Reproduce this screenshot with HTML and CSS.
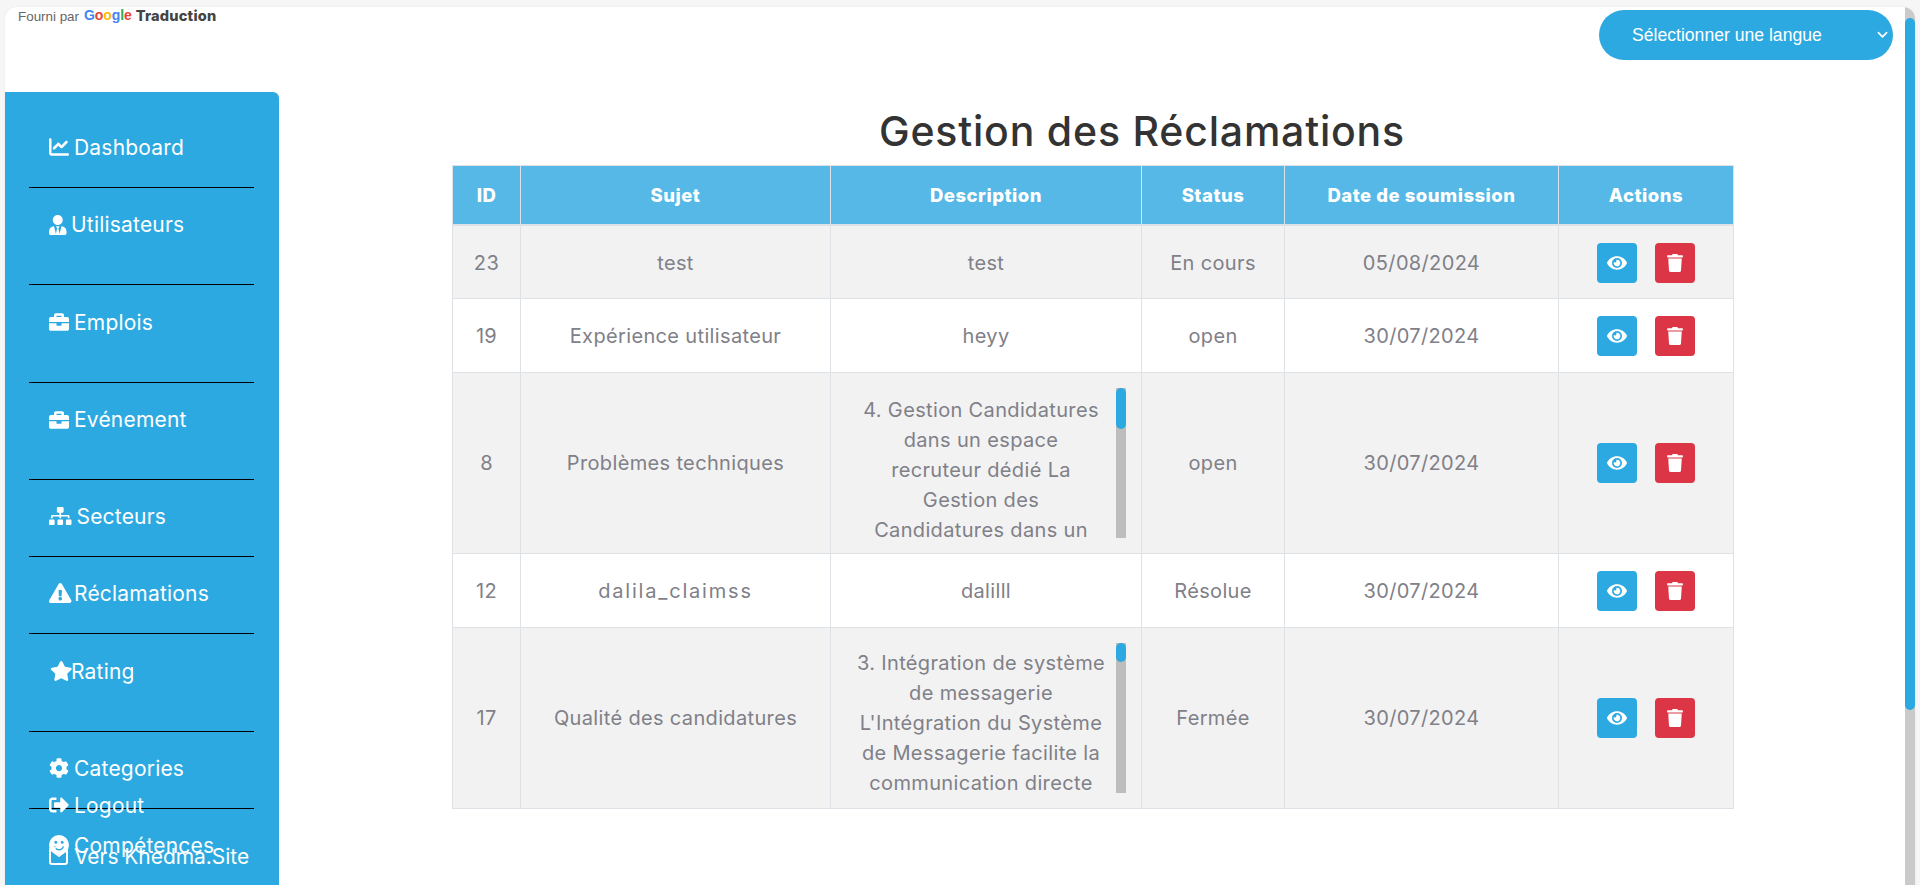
FILE: index.html
```html
<!DOCTYPE html>
<html lang="fr">
<head>
    <meta charset="UTF-8">
    <meta name="viewport" content="width=device-width, initial-scale=1.0">
    <title>Gestion des Réclamations</title>
    <link rel="stylesheet" href="styles.css">
</head>
<body>
    <svg class="sprites">
        <symbol id="i-eye" viewBox="0 0 576 512"><path d="M572.520 241.400C518.290 135.590 410.930 64 288 64S57.680 135.640 3.480 241.410a32.350 32.350 0 0 0 0 29.190C57.710 376.410 165.070 448 288 448s230.320-71.640 284.520-177.410a32.350 32.350 0 0 0 0-29.190zM288 400a144 144 0 1 1 144-144 143.930 143.930 0 0 1-144 144zm0-240a95.310 95.310 0 0 0-25.310 3.790 47.850 47.850 0 0 1-66.900 66.900A95.780 95.780 0 1 0 288 160z"/></symbol>
        <symbol id="i-trash" viewBox="0 0 448 512"><path d="M432 32H312l-9.400-18.700A24 24 0 0 0 281.100 0H166.800a23.720 23.720 0 0 0-21.400 13.300L136 32H16A16 16 0 0 0 0 48v32a16 16 0 0 0 16 16h416a16 16 0 0 0 16-16V48a16 16 0 0 0-16-16zM53.200 467a48 48 0 0 0 47.900 45h245.800a48 48 0 0 0 47.900-45L416 128H32z"/></symbol>
        <symbol id="i-briefcase" viewBox="0 0 512 512"><path d="M320 336c0 8.840-7.160 16-16 16h-96c-8.840 0-16-7.160-16-16v-48H0v144c0 25.600 22.400 48 48 48h416c25.600 0 48-22.400 48-48V288H320v48zm144-208h-80V80c0-25.600-22.400-48-48-48H176c-25.600 0-48 22.400-48 48v48H48c-25.600 0-48 22.400-48 48v80h512v-80c0-25.600-22.400-48-48-48zm-144 0H192V96h128v32z"/></symbol>
    </svg>

    <div class="card">
        <div class="page">
            <div class="topbar">
                <div class="attribution">
                    <span>Fourni par</span>
                    <span class="google"><span class="g-blue">G</span><span class="g-red">o</span><span class="g-yellow">o</span><span class="g-blue">g</span><span class="g-green">l</span><span class="g-red">e</span></span>
                    <b>Traduction</b>
                </div>
                <div class="lang-wrap">
                    <select class="lang">
                        <option>Sélectionner une langue</option>
                        <option>Français</option>
                        <option>English</option>
                    </select>
                    <svg class="lang-arrow" viewBox="0 0 12 8"><path d="M1.500 1.500 6 6l4.500-4.500" fill="none" stroke="#fff" stroke-width="1.800" stroke-linecap="round" stroke-linejoin="round"/></svg>
                </div>
            </div>
            <div class="content">
                <aside class="sidebar">
                    <a class="nav-item first" href="#">
                        <svg class="icon" viewBox="0 0 512 512"><path d="M64 64c0-17.700-14.300-32-32-32S0 46.300 0 64V400c0 44.200 35.800 80 80 80H480c17.700 0 32-14.300 32-32s-14.300-32-32-32H80c-8.800 0-16-7.200-16-16V64zm406.600 86.600c12.500-12.500 12.500-32.800 0-45.300s-32.800-12.500-45.300 0L320 210.700l-57.400-57.400c-12.500-12.500-32.800-12.500-45.300 0l-112 112c-12.500 12.500-12.500 32.800 0 45.300s32.800 12.500 45.300 0L240 221.300l57.400 57.400c12.500 12.500 32.800 12.500 45.300 0l128-128z"/></svg>
                        Dashboard
                    </a>
                    <hr>
                    <a class="nav-item tall" href="#">
                        <svg class="icon icon-user" viewBox="0 0 448 512"><path d="M224 256c70.700 0 128-57.300 128-128S294.700 0 224 0 96 57.300 96 128s57.300 128 128 128zm95.800 32.600L272 480l-32-136 32-56h-96l32 56-32 136-47.800-191.400C56.900 292 0 350.300 0 422.400V464c0 26.500 21.500 48 48 48h352c26.500 0 48-21.500 48-48v-41.600c0-72.100-56.900-130.400-128.200-133.800z"/></svg>
                        Utilisateurs
                    </a>
                    <hr>
                    <a class="nav-item taller" href="#">
                        <svg class="icon"><use href="#i-briefcase"/></svg>
                        Emplois
                    </a>
                    <hr>
                    <a class="nav-item tall" href="#">
                        <svg class="icon"><use href="#i-briefcase"/></svg>
                        Evénement
                    </a>
                    <hr>
                    <a class="nav-item" href="#">
                        <svg class="icon icon-sitemap" viewBox="0 0 640 512"><path d="M128 352H32c-17.670 0-32 14.330-32 32v96c0 17.670 14.330 32 32 32h96c17.670 0 32-14.330 32-32v-96c0-17.670-14.330-32-32-32zm-24-80h192v48h48v-48h192v48h48v-57.590c0-21.170-17.230-38.410-38.410-38.410H344v-64h40c17.670 0 32-14.330 32-32V32c0-17.670-14.330-32-32-32H256c-17.670 0-32 14.330-32 32v96c0 17.670 14.330 32 32 32h40v64H94.410C73.230 224 56 241.230 56 262.410V320h48v-48zm264 80h-96c-17.670 0-32 14.330-32 32v96c0 17.670 14.330 32 32 32h96c17.670 0 32-14.330 32-32v-96c0-17.670-14.330-32-32-32zm240 0h-96c-17.670 0-32 14.330-32 32v96c0 17.670 14.330 32 32 32h96c17.670 0 32-14.330 32-32v-96c0-17.670-14.330-32-32-32z"/></svg>
                        Secteurs
                    </a>
                    <hr>
                    <a class="nav-item" href="#">
                        <svg class="icon icon-wide" viewBox="0 0 576 512"><path d="M569.517 440.013C587.975 472.007 564.806 512 527.940 512H48.054c-36.937 0-59.999-40.055-41.577-71.987L246.423 24.314c18.467-32.009 64.720-31.951 83.154 0l239.940 415.699zM288 354c-25.405 0-46 20.595-46 46s20.595 46 46 46 46-20.595 46-46-20.595-46-46-46zm-43.673-165.346l7.418 136c.347 6.364 5.609 11.346 11.982 11.346h48.546c6.373 0 11.635-4.982 11.982-11.346l7.418-136c.375-6.874-5.098-12.654-11.982-12.654h-63.383c-6.884 0-12.356 5.780-11.981 12.654z"/></svg>
                        Réclamations
                    </a>
                    <hr>
                    <a class="nav-item taller" href="#">
                        <svg class="icon icon-star" viewBox="0 0 576 512"><path d="M259.300 17.800L194 150.200 47.900 171.500c-26.200 3.800-36.700 36.100-17.700 54.600l105.700 103-25 145.500c-4.500 26.300 23.200 46 46.400 33.700L288 439.600l130.700 68.700c23.200 12.200 50.900-7.400 46.400-33.700l-25-145.500 105.700-103c19-18.500 8.500-50.800-17.700-54.600L382 150.200 316.700 17.800c-11.700-23.600-45.600-23.900-57.400 0z"/></svg>
                        Rating
                    </a>
                    <hr>
                    <a class="nav-item" href="#">
                        <svg class="icon" viewBox="0 0 512 512"><path d="M487.400 315.700l-42.600-24.600c4.300-23.200 4.300-47 0-70.200l42.600-24.600c4.900-2.800 7.100-8.600 5.500-14-11.100-35.600-30-67.800-54.700-94.600-3.800-4.100-10-5.100-14.800-2.300L380.800 110c-17.900-15.400-38.500-27.300-60.800-35.100V25.800c0-5.600-3.900-10.500-9.400-11.700-36.700-8.200-74.300-7.800-109.200 0-5.500 1.200-9.400 6.100-9.400 11.700V75c-22.200 7.900-42.800 19.800-60.800 35.100L88.700 85.500c-4.900-2.800-11-1.900-14.800 2.300-24.700 26.700-43.600 58.900-54.700 94.600-1.700 5.400.6 11.200 5.500 14L67.300 221c-4.300 23.200-4.300 47 0 70.200l-42.600 24.600c-4.900 2.800-7.100 8.600-5.500 14 11.100 35.600 30 67.800 54.700 94.600 3.800 4.100 10 5.100 14.800 2.300l42.600-24.600c17.900 15.400 38.500 27.300 60.800 35.100v49.200c0 5.600 3.900 10.500 9.400 11.700 36.700 8.200 74.300 7.800 109.200 0 5.500-1.200 9.400-6.100 9.400-11.700v-49.200c22.200-7.900 42.800-19.800 60.800-35.100l42.600 24.600c4.900 2.800 11 1.900 14.800-2.300 24.700-26.700 43.600-58.900 54.700-94.600 1.500-5.500-.7-11.300-5.600-14.100zM256 336c-44.100 0-80-35.900-80-80s35.900-80 80-80 80 35.900 80 80-35.900 80-80 80z"/></svg>
                        Categories
                    </a>
                    <hr>
                    <a class="nav-item" href="#">
                        <svg class="icon" viewBox="0 0 20 20"><path fill-rule="evenodd" d="M10 0a10 10 0 1 1 0 20 10 10 0 0 1 0-20zM6.800 5.800a1.500 1.500 0 1 0 0 3 1.500 1.500 0 0 0 0-3zm6.400 0a1.500 1.500 0 1 0 0 3 1.500 1.500 0 0 0 0-3zM4.900 11.600c.8 2.500 2.800 3.900 5.100 3.900s4.300-1.400 5.100-3.900l-1.300-.4c-.7 1.800-2.100 2.900-3.800 2.900s-3.100-1.100-3.800-2.900z"/></svg>
                        Compétences
                    </a>

                    <!-- these two are stuck to the bottom and sit over the list -->
                    <a class="nav-item logout" href="#">
                        <svg class="icon" viewBox="0 0 512 512"><path d="M497 273L329 441c-15 15-41 4.500-41-17v-96H152c-13.300 0-24-10.700-24-24v-96c0-13.300 10.700-24 24-24h136V88c0-21.400 25.900-32 41-17l168 168c9.300 9.400 9.300 24.600 0 34zM192 436v-40c0-6.600-5.400-12-12-12H96c-17.700 0-32-14.300-32-32V160c0-17.700 14.300-32 32-32h84c6.600 0 12-5.400 12-12V76c0-6.600-5.400-12-12-12H96c-53 0-96 43-96 96v192c0 53 43 96 96 96h84c6.600 0 12-5.400 12-12z"/></svg>
                        Logout
                    </a>
                    <a class="nav-item site-link" href="#">
                        <svg class="icon" viewBox="0 0 20 20"><path fill="none" stroke="#fff" stroke-width="2" stroke-linecap="round" stroke-linejoin="round" d="M6 2H3a2 2 0 0 0-2 2v12a2 2 0 0 0 2 2h13a2 2 0 0 0 2-2V4a2 2 0 0 0-2-2"/><path fill="none" stroke="#fff" stroke-width="2" stroke-linecap="round" stroke-linejoin="round" d="M5 6l5 4 6-5"/></svg>
                        Vers Khedma.Site
                    </a>
                </aside>

                <main class="main">
                    <h1 class="title">Gestion des Réclamations</h1>
                    <table class="claims">
                        <colgroup>
                            <col class="col-id">
                            <col class="col-subject">
                            <col class="col-desc">
                            <col class="col-status">
                            <col class="col-date">
                            <col class="col-actions">
                        </colgroup>
                        <thead>
                            <tr>
                                <th>ID</th>
                                <th>Sujet</th>
                                <th>Description</th>
                                <th>Status</th>
                                <th>Date de soumission</th>
                                <th>Actions</th>
                            </tr>
                        </thead>
                        <tbody>
                            <tr>
                                <td>23</td>
                                <td>test</td>
                                <td>test</td>
                                <td>En cours</td>
                                <td>05/08/2024</td>
                                <td>
                                    <div class="actions">
                                        <button class="btn btn-view"><svg><use href="#i-eye"/></svg></button>
                                        <button class="btn btn-delete"><svg><use href="#i-trash"/></svg></button>
                                    </div>
                                </td>
                            </tr>
                            <tr>
                                <td>19</td>
                                <td>Expérience utilisateur</td>
                                <td>heyy</td>
                                <td>open</td>
                                <td>30/07/2024</td>
                                <td>
                                    <div class="actions">
                                        <button class="btn btn-view"><svg><use href="#i-eye"/></svg></button>
                                        <button class="btn btn-delete"><svg><use href="#i-trash"/></svg></button>
                                    </div>
                                </td>
                            </tr>
                            <tr>
                                <td>8</td>
                                <td>Problèmes techniques</td>
                                <td>
                                    <div class="desc">
                                        <div class="desc-text">4. Gestion Candidatures<br>dans un espace<br>recruteur dédié La<br>Gestion des<br>Candidatures dans un</div>
                                        <div class="desc-bar"><div class="desc-thumb"></div></div>
                                    </div>
                                </td>
                                <td>open</td>
                                <td>30/07/2024</td>
                                <td>
                                    <div class="actions">
                                        <button class="btn btn-view"><svg><use href="#i-eye"/></svg></button>
                                        <button class="btn btn-delete"><svg><use href="#i-trash"/></svg></button>
                                    </div>
                                </td>
                            </tr>
                            <tr>
                                <td>12</td>
                                <td class="spaced">dalila_claimss</td>
                                <td>dalilll</td>
                                <td>Résolue</td>
                                <td>30/07/2024</td>
                                <td>
                                    <div class="actions">
                                        <button class="btn btn-view"><svg><use href="#i-eye"/></svg></button>
                                        <button class="btn btn-delete"><svg><use href="#i-trash"/></svg></button>
                                    </div>
                                </td>
                            </tr>
                            <tr>
                                <td>17</td>
                                <td>Qualité des candidatures</td>
                                <td>
                                    <div class="desc desc-tight">
                                        <div class="desc-text">3. Intégration de système<br>de messagerie<br>L'Intégration du Système<br>de Messagerie facilite la<br>communication directe</div>
                                        <div class="desc-bar"><div class="desc-thumb"></div></div>
                                    </div>
                                </td>
                                <td>Fermée</td>
                                <td>30/07/2024</td>
                                <td>
                                    <div class="actions">
                                        <button class="btn btn-view"><svg><use href="#i-eye"/></svg></button>
                                        <button class="btn btn-delete"><svg><use href="#i-trash"/></svg></button>
                                    </div>
                                </td>
                            </tr>
                        </tbody>
                    </table>
                </main>
            </div>
        </div>
        <div class="page-scroll"><div class="page-thumb"></div></div>
    </div>
</body>
</html>
```

FILE: styles.css
```css
html, body {
    height: 100%;
    overflow: hidden;
}
body {
    font-family: Inter, "Open Sans", sans-serif;
    background-color: #f6f6f6;
    margin: 0;
    padding: 7px 5px 0;
    box-sizing: border-box;
    color: #333;
}
.sprites {
    display: none;
}
.card {
    display: flex;
    height: 878px;
    background: white;
    border-radius: 12px 12px 0 0;
    overflow: hidden;
    box-shadow: 0 0 2px rgba(0, 0, 0, 0.08);
}
.page {
    flex: 1;
    min-width: 0;
    display: flex;
    flex-direction: column;
}
.page-scroll {
    width: 10px;
    background-color: #cacaca;
}
.page-thumb {
    margin-top: 11px;
    height: 692px;
    background-color: #2ca9e1;
    border-radius: 5px;
}

/* top bar */
.topbar {
    height: 85px;
    flex: none;
    display: flex;
    justify-content: space-between;
    align-items: flex-start;
    padding-right: 12px;
}
.attribution {
    display: flex;
    align-items: center;
    gap: 4px;
    padding-left: 13px;
    height: 18px;
    font-family: "Liberation Sans", Arial, sans-serif;
    font-size: 13.400px;
    color: #666;
}
.attribution b {
    font-family: Inter, sans-serif;
    font-size: 14.600px;
    font-weight: 800;
    letter-spacing: 0.2px;
    color: #444;
}
.google {
    margin-left: 1px;
    font-size: 14px;
    font-weight: bold;
    letter-spacing: -0.1px;
    position: relative;
    top: -1px;
}
.g-blue { color: #4285f4; }
.g-red { color: #ea4335; }
.g-yellow { color: #fbbc05; }
.g-green { color: #34a853; }
.lang-wrap {
    position: relative;
    margin-top: 3px;
}
.lang {
    display: block;
    appearance: none;
    width: 294px;
    height: 50px;
    border: 0;
    border-radius: 25px;
    padding: 0 33px;
    background-color: #2ca9e1;
    color: white;
    font-family: "Liberation Sans", Arial, sans-serif;
    font-size: 17.600px;
}
.lang-arrow {
    position: absolute;
    right: 5px;
    top: 21px;
    width: 11px;
    height: 8px;
}

/* sidebar */
.content {
    flex: 1;
    min-height: 0;
    display: flex;
}
.sidebar {
    position: relative;
    flex: none;
    width: 274px;
    box-sizing: border-box;
    padding: 0 24px;
    background-color: #2ca9e1;
    border-radius: 0 6px 0 0;
    overflow: hidden;
}
.sidebar hr {
    margin: 0;
    border: 0;
    border-top: 1px solid black;
    width: 225px;
}
.nav-item {
    display: flex;
    align-items: center;
    gap: 5px;
    height: 76px;
    padding: 0 0 4px 20px;
    box-sizing: border-box;
    color: white;
    font-size: 21px;
    letter-spacing: 0.2px;
    text-decoration: none;
    white-space: nowrap;
}
.first {
    height: 95px;
    padding-top: 15px;
    padding-bottom: 0;
}
.tall {
    height: 96px;
    padding-bottom: 23px;
}
.taller {
    height: 97px;
    padding-bottom: 23px;
}
.icon {
    width: 20px;
    height: 20px;
    fill: white;
    flex: none;
}
.icon-user {
    width: 17.500px;
    margin-right: -0.500px;
}
.icon-sitemap {
    width: 22.500px;
    height: 18px;
}
.icon-wide {
    width: 22.500px;
    margin-right: -2.500px;
}
.icon-star {
    width: 22.500px;
    margin-left: 1px;
    margin-right: -6.500px;
}
.logout,
.site-link {
    position: absolute;
    left: 24px;
    padding: 0 0 0 20px;
    height: 30px;
}
.logout {
    top: 698px;
}
.site-link {
    top: 749px;
    letter-spacing: -0.05px;
}

/* table */
.main {
    flex: 1;
    min-width: 0;
    padding-top: 9px;
}
.title {
    margin: 0 0 4px;
    padding-left: 100px;
    height: 60px;
    line-height: 60px;
    text-align: center;
    font-size: 41px;
    font-weight: 500;
    letter-spacing: 0.8px;
    color: #333;
}
.claims {
    width: 1281px;
    margin-left: 173px;
    border-collapse: collapse;
    table-layout: fixed;
    font-size: 20px;
    letter-spacing: 0.35px;
    color: #7f8088;
}
.col-id { width: 68px; }
.col-subject { width: 310px; }
.col-desc { width: 311px; }
.col-status { width: 143px; }
.col-date { width: 274px; }
.col-actions { width: 175px; }
.claims th, .claims td {
    border: 1px solid #dee2e6;
    padding: 15px;
    text-align: center;
    vertical-align: middle;
}
.claims th {
    height: 59px;
    box-sizing: border-box;
    padding: 0 5px;
    background-color: #56b8e6;
    color: white;
    font-weight: 800;
    font-size: 18.500px;
    letter-spacing: 0.5px;
    border-bottom-width: 2px;
}
.claims td {
    height: 74px;
    box-sizing: border-box;
}
.claims tbody tr:first-child td {
    padding-top: 17px;
}
.claims tbody tr:nth-child(odd) {
    background-color: #f2f2f2;
}
.claims td.spaced {
    letter-spacing: 1.800px;
}

.desc {
    display: flex;
    height: 150px;
}
.desc-text {
    flex: 1;
    min-width: 0;
    padding-top: 7px;
    line-height: 30px;
    white-space: nowrap;
}
.desc-tight .desc-text {
    padding-top: 5px;
}
.desc-bar {
    flex: none;
    width: 10px;
    background-color: #bdbdbd;
}
.desc-thumb {
    height: 41px;
    background-color: #2ca9e1;
    border-radius: 5px;
}
.desc-tight .desc-thumb {
    height: 19px;
}

.actions {
    display: flex;
    justify-content: center;
    gap: 18px;
}
.btn {
    display: flex;
    align-items: center;
    justify-content: center;
    width: 40px;
    height: 40px;
    padding: 0;
    border: 0;
    border-radius: 4px;
}
.btn svg {
    height: 18px;
    fill: white;
}
.btn-view {
    background-color: #2ca9e1;
}
.btn-view svg {
    width: 20px;
}
.btn-delete {
    background-color: #dc3545;
}
.btn-delete svg {
    width: 16px;
}
```
